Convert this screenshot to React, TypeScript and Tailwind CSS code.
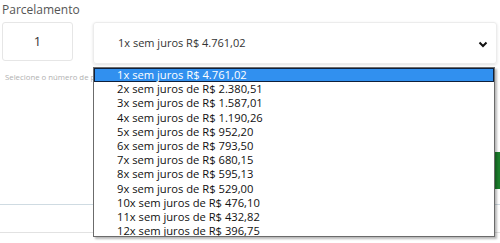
const OPTIONS = [
  "1x sem juros R$ 4.761,02",
  "2x sem juros de R$ 2.380,51",
  "3x sem juros de R$ 1.587,01",
  "4x sem juros de R$ 1.190,26",
  "5x sem juros de R$ 952,20",
  "6x sem juros de R$ 793,50",
  "7x sem juros de R$ 680,15",
  "8x sem juros de R$ 595,13",
  "9x sem juros de R$ 529,00",
  "10x sem juros de R$ 476,10",
  "11x sem juros de R$ 432,82",
  "12x sem juros de R$ 396,75",
];

/* ================= DROPDOWN ================= */

function OptionList() {
  return (
    <div className="absolute left-[93px] top-[67px] w-[402px] h-[170px] overflow-hidden bg-white border border-[#6b6b6b] shadow-[2px_2px_2px_rgba(0,0,0,0.28)]">
      {OPTIONS.map((opt, i) => (
        <div
          key={opt}
          className={
            i === 0
              ? "h-[14.2px] leading-[12px] pl-[22px] border border-[#10203a] bg-[#3190ef] text-white text-[11.2px] whitespace-nowrap"
              : "h-[14.2px] leading-[14.2px] pl-[23px] text-[#111] text-[11.2px] whitespace-nowrap"
          }
        >
          {opt}
        </div>
      ))}
    </div>
  );
}

/* ================= PAGE ================= */

export default function App() {
  return (
    <div className="relative w-[500px] h-[243px] overflow-hidden bg-white font-['Open_Sans',sans-serif]">
      <p className="pl-[2px] text-[12px] leading-[20px] text-[#555]">
        Parcelamento
      </p>

      <div className="flex items-start gap-[20px] pl-[2px] mt-[2px]">
        <div className="w-[71px] h-[39px] flex items-center justify-center rounded-[3px] border border-[#e6e6e6] text-[13px] text-[#333]">
          1
        </div>
        <div className="w-[404px] h-[42px] flex items-center justify-between pl-[24px] pr-[8px] rounded-[3px] border border-[#ececec] shadow-[0_1px_3px_rgba(0,0,0,0.12)] text-[11px] text-[#333]">
          <span>1x sem juros R$ 4.761,02</span>
          <svg width="10" height="7" viewBox="0 0 10 7" className="mt-[2px]">
            <polyline
              points="1.5,1.5 5,5 8.5,1.5"
              fill="none"
              stroke="#111"
              strokeWidth="2"
            />
          </svg>
        </div>
      </div>

      <p className="pl-[5px] mt-[7px] text-[7.8px] leading-[12px] text-[#b0b0b0] whitespace-nowrap">
        Selecione o número de parcelas
      </p>

      <div className="mt-[69px] ml-[495px] w-[110px] h-[37px] flex items-center pl-[6px] bg-[#1c7f2c] text-white text-[14px] font-bold">
        Comprar
      </div>

      <div className="mt-[15px] h-px bg-[#cfdbe2]" />
      <div className="mt-[27px] h-px bg-[#e2e2e2]" />

      <OptionList />
    </div>
  );
}
